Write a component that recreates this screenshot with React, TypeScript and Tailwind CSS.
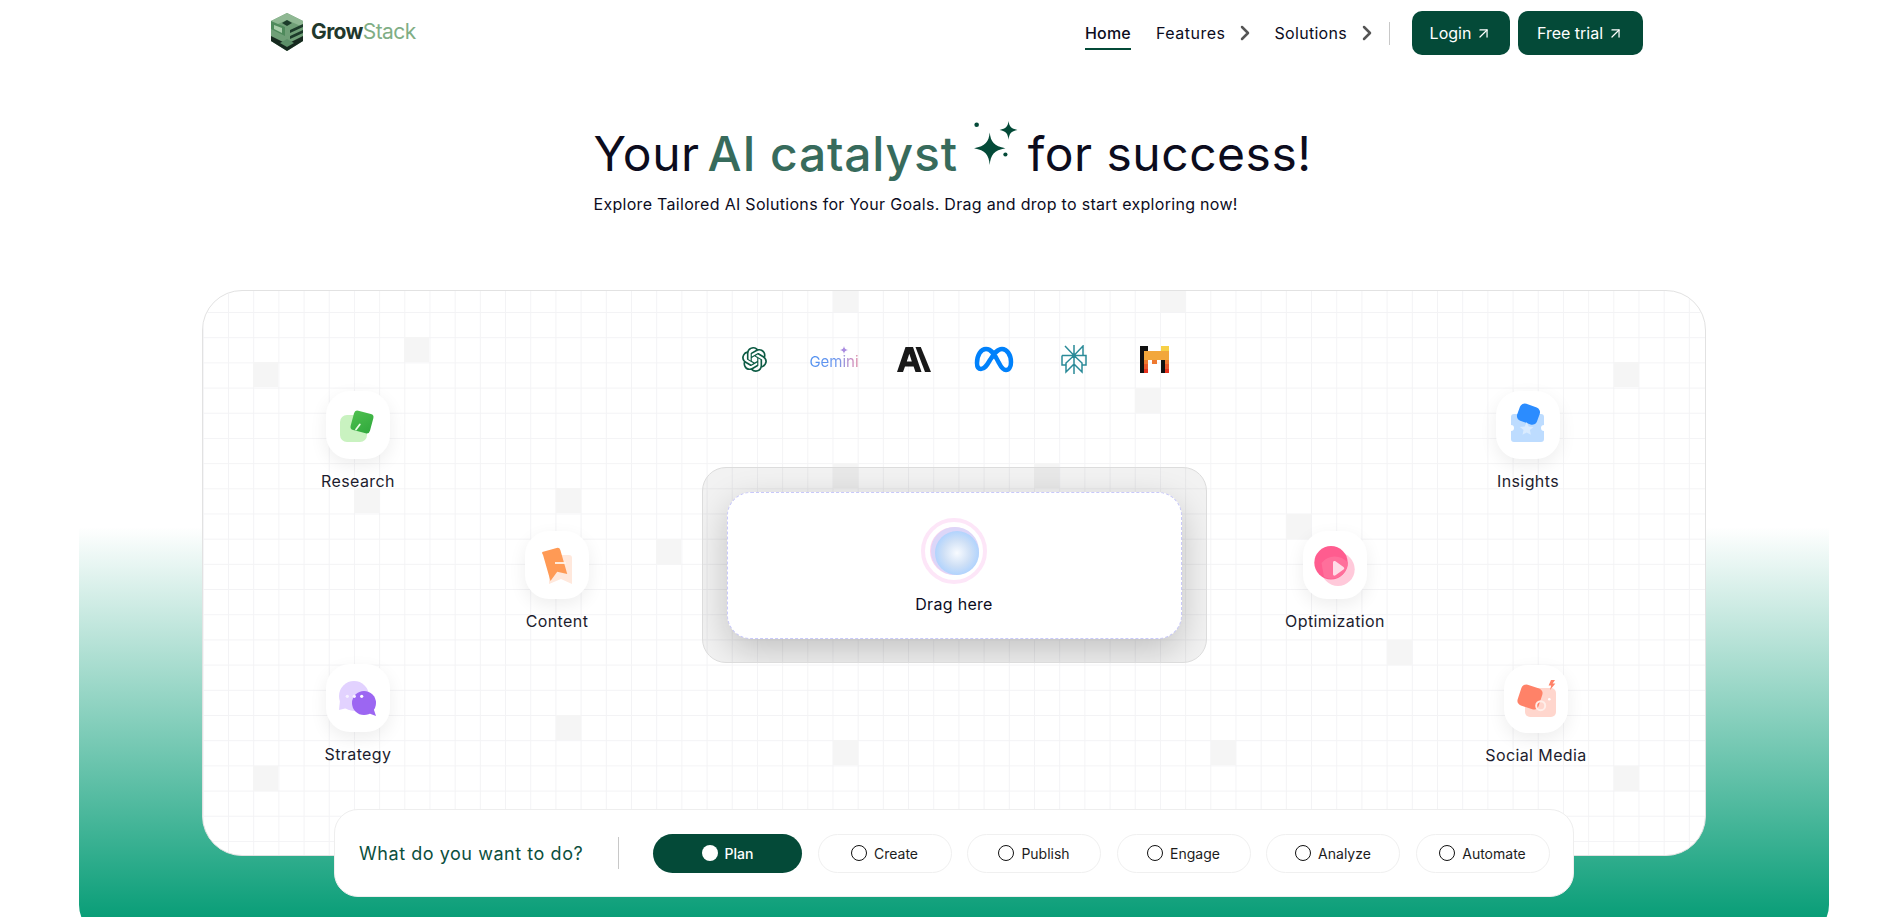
import { ArrowUpRight, ChevronRight } from "lucide-react";
import { SiOpenai } from "react-icons/si";
import type { ReactNode } from "react";

const shadedCells = [
  [7, 1], [1, 2], [24, -1], [37, -1], [55, 2], [36, 3], [5, 7], [13, 7], [17, 9],
  [24, 6], [32, 6], [42, 8], [46, 13], [13, 16], [24, 17], [39, 17], [1, 18], [55, 18],
];

const actions = ["Create", "Publish", "Engage", "Analyze", "Automate"];

function GrowStackMark() {
  return (
    <svg width="34" height="40" viewBox="0 0 34 40">
      <path d="M17 1 33 9v20l-16 10L1 29V9z" fill="#6f9f77" />
      <path d="M17 1 33 9v6l-16-7-16 7V9z" fill="#8fb893" />
      <path d="M1 9l14 6v9l-14-7z" fill="#4f8a5c" />
      <path d="M4 13l8 3v5l-8-4z" fill="#a8cdaa" />
      <path d="M33 12l-13 6v3l13-6zM33 18l-13 6v3l13-6z" fill="#1c3b2a" />
      <path d="M1 24l16 8 16-8v5l-16 10L1 29z" fill="#16291f" />
      <path d="M10 31l7-4 7 4-7 4z" fill="#5c8f68" />
      <path d="M17 8l5 3-5 3-5-3z" fill="#1c3b2a" />
    </svg>
  );
}

function Sparkles() {
  return (
    <svg width="46" height="45" viewBox="0 0 44 43" fill="#044a38">
      <path d="M16 11c1 9 4 13 15 15-11 2-14 6-15 16-1-10-4-14-15-16 11-2 14-6 15-15z" />
      <path d="M34 0c.6 5 2.400 7.300 8.500 8.500C36.400 9.700 34.600 12 34 18c-.6-6-2.400-8.300-8.500-9.500C31.600 7.300 33.400 5 34 0z" />
      <circle cx="3.500" cy="3.500" r="2.200" />
      <circle cx="31" cy="32" r="2" />
    </svg>
  );
}

function GeminiLogo() {
  return (
    <span className="relative block pt-[6px]">
      <span className="block bg-[linear-gradient(90deg,#4d8ff0_0%,#6c97ee_55%,#c88cc4_85%,#dc8aa0_100%)] bg-clip-text text-[15px] leading-5 text-transparent">
        Gemini
      </span>
      <svg className="absolute left-[31px] top-0" width="8" height="8" viewBox="0 0 8 8" fill="#a98be0">
        <path d="M4 0c.3 2.400 1.300 3.500 4 4-2.700.5-3.700 1.600-4 4-.3-2.400-1.300-3.500-4-4 2.700-.5 3.700-1.600 4-4z" />
      </svg>
    </span>
  );
}

function AnthropicLogo() {
  return (
    <svg width="34" height="25" viewBox="0 0 34 25" fill="#191919">
      <path fillRule="evenodd" d="M0 25 8.500 0h7.500L24.500 25h-6l-1.900-5.500H8L6 25zM9.800 14.500h5L12.300 6.800z" />
      <path d="M18.500 0h5.300L34 25h-6z" />
    </svg>
  );
}

function MetaLogo() {
  return (
    <svg width="40" height="27" viewBox="0 0 40 27" fill="none">
      <path
        d="M3 17C3 9 7 3 12 3c7 0 10 9 13 14 2 4 4 7 7 7 3 0 5-3 5-8C37 9 33 3 28 3c-5 0-8 5-12 11-3 5-5 9-9 9-3 0-4-3-4-6z"
        stroke="#0081fb"
        strokeWidth="4.500"
        strokeLinejoin="round"
      />
    </svg>
  );
}

function PerplexityLogo() {
  return (
    <svg width="26" height="29" viewBox="0 0 26 29" fill="none" stroke="#2a8a98" strokeWidth="1.500">
      <path d="M13 0v29M4 1l9 9.500L22 1v9.500M1 10.500h24v9.500h-4M1 10.500v9.500h4M13 10.500 5 18v9l8-8 8 8v-9z" />
    </svg>
  );
}

function MistralLogo() {
  const rows = ["#f7d046", "#f2a73b", "#f2a73b", "#ee792f", "#eb5829", "#e5321e"];
  const mask = ["1100011", "1111111", "1111111", "1101011", "1100011", "1100011"];
  return (
    <svg width="29" height="27" viewBox="0 0 35 30" preserveAspectRatio="none" shapeRendering="crispEdges">
      {mask.map((row, y) =>
        row.split("").map((cell, x) =>
          cell === "1" ? (
            <rect
              fill={x === 0 || (y > 2 && x === 5) || (y === 0 && x === 1) ? "#111" : rows[y]}
              height="5"
              key={`${x}-${y}`}
              width="5"
              x={x * 5}
              y={y * 5}
            />
          ) : null,
        ),
      )}
    </svg>
  );
}

function Orb() {
  return (
    <svg width="66" height="66" viewBox="0 0 66 66">
      <defs>
        <radialGradient id="orbCore" cx="50%" cy="50%" r="55%">
          <stop offset="0%" stopColor="#f8fbff" />
          <stop offset="55%" stopColor="#cfe0f6" />
          <stop offset="100%" stopColor="#a9d0ff" />
        </radialGradient>
      </defs>
      <circle cx="33" cy="33" r="31" fill="none" stroke="#fde6f8" strokeWidth="4" />
      <circle cx="33" cy="33" r="24" fill="#fbd3ef" />
      <circle cx="34" cy="33" r="24" fill="#dcd6f8" />
      <circle cx="36" cy="35" r="22" fill="url(#orbCore)" />
    </svg>
  );
}

function ResearchIcon() {
  return (
    <>
      <defs>
        <linearGradient id="researchFront" x1="0" y1="0" x2="1" y2="1">
          <stop offset="0%" stopColor="#4fc04f" />
          <stop offset="100%" stopColor="#2fa83c" />
        </linearGradient>
      </defs>
      <rect x="14" y="24" width="27" height="27" rx="7" fill="#c9f2c0" />
      <rect x="26" y="21" width="20" height="20" rx="3.500" fill="url(#researchFront)" transform="rotate(15 36 31)" />
      <path d="M30 38.500 33.800 33.500" stroke="#eafbe6" strokeWidth="1.800" strokeLinecap="round" />
    </>
  );
}

function ContentIcon() {
  return (
    <>
      <path d="M27 24h17a3 3 0 0 1 3 3v26l-11-5-12 5V27a3 3 0 0 1 3-3z" fill="#ffe8dc" />
      <path
        d="M21 18h15a3 3 0 0 1 3 3v25l-9-5-9 7V21a3 3 0 0 1 0-3z"
        fill="#ff9a55"
        transform="rotate(-16 30 33)"
      />
      <path d="M30 32h11" stroke="#fff3ea" strokeWidth="1.800" />
    </>
  );
}

function StrategyIcon() {
  return (
    <>
      <circle cx="28" cy="32" r="15" fill="#e2d2ff" />
      <path d="M14 36 13 46l8-2z" fill="#e2d2ff" />
      <circle cx="38" cy="39" r="12" fill="#9c66f2" />
      <path d="M47 43l3 9-8-3z" fill="#9c66f2" />
      <circle cx="21.300" cy="32.300" r="1.600" fill="#f7f2ff" />
      <circle cx="28.300" cy="32.300" r="1.600" fill="#f7f2ff" />
      <circle cx="35.700" cy="32.300" r="1.600" fill="#fff" />
    </>
  );
}

function InsightsIcon() {
  return (
    <>
      <path
        d="M18 23h27a3 3 0 0 1 3 3v8a3 3 0 0 0 0 6v8a3 3 0 0 1-3 3H18a3 3 0 0 1-3-3v-8a3 3 0 0 0 0-6v-8a3 3 0 0 1 3-3z"
        fill="#bddcff"
      />
      <rect x="22" y="14" width="21" height="18" rx="5" fill="#2b8cff" transform="rotate(20 32 23)" />
      <path
        d="m30.700 31 2 4.400 4.800.5-3.600 3.200 1 4.700-4.200-2.400-4.200 2.400 1-4.700-3.600-3.200 4.800-.5z"
        fill="#d9ebff"
      />
    </>
  );
}

function OptimizationIcon() {
  return (
    <>
      <circle cx="35" cy="38.300" r="16.700" fill="#ffc9da" />
      <circle cx="28" cy="31.700" r="16.700" fill="#ff5c8f" />
      <path d="M18.500 32a16.700 16.700 0 0 1 26.200-.500 16.700 16.700 0 0 1-.5 5A16.700 16.700 0 0 1 21 46z" fill="#ff6f9b" />
      <path d="M30 31.500c0-1.500 1.200-2 2.500-1.200l8 5.700c1 .8 1 1.900 0 2.600l-8 5.700c-1.300.8-2.500.3-2.500-1.200z" fill="#ffdce7" />
    </>
  );
}

function SocialIcon() {
  return (
    <>
      <rect x="21" y="23" width="31" height="29" rx="5" fill="#ffd6cd" />
      <rect x="15" y="21" width="22" height="22" rx="5" fill="#ff8268" transform="rotate(18 26 32)" />
      <circle cx="36.700" cy="40.700" r="4.500" fill="none" stroke="#ffeee9" strokeWidth="2" />
      <circle cx="45.300" cy="34.300" r="1.300" fill="#fff" />
      <path d="M47 15h4l-2.400 3.500h2.800L46 25l1.200-4.500h-2.600z" fill="#ff8268" />
    </>
  );
}

function FeatureNode({ className, label, children }: { className: string; label: string; children: ReactNode }) {
  return (
    <div className={`absolute ${className}`}>
      <div className="h-[68px] w-16 rounded-3xl bg-white shadow-[0_6px_18px_rgba(0,0,0,0.07)]">
        <svg width="64" height="68" viewBox="0 0 64 68">
          {children}
        </svg>
      </div>
      <p className="absolute left-8 top-[78px] -translate-x-1/2 whitespace-nowrap text-center text-[16px] leading-6 tracking-[0.4px] text-[#1c1c2e]">
        {label}
      </p>
    </div>
  );
}

function NavButton({ label, width }: { label: string; width: string }) {
  return (
    <button className={`flex h-11 items-center justify-center gap-1 rounded-[10px] bg-[#044a38] text-[16px] text-white ${width}`} type="button">
      {label}
      <ArrowUpRight size={17} strokeWidth={1.75} />
    </button>
  );
}

export default function App() {
  return (
    <div className="relative h-[917px] overflow-hidden bg-white font-['Inter',sans-serif] text-[#0c0c1d]">
      <header className="flex h-[66px] items-start pl-[270px] pr-[255px] pt-[11px]">
        <div className="flex items-center gap-[7px] pt-[1px]">
          <GrowStackMark />
          <span className="text-[21px] font-bold leading-10 tracking-[-0.6px] text-[#21382c]">
            Grow<span className="font-normal text-[#7fae85]">Stack</span>
          </span>
        </div>
        <nav className="ml-auto flex h-11 items-center text-[16px]">
          <a className="relative mr-[25px] font-medium leading-[44px] tracking-[0.2px]">
            Home
            <span className="absolute bottom-[5px] left-0 h-0.5 w-full bg-[#044a38]" />
          </a>
          <a className="tracking-[0.5px]">Features</a>
          <ChevronRight className="ml-[7px] mr-[18px] text-[#555]" size={24} strokeWidth={2.5} />
          <a className="tracking-[0.3px]">Solutions</a>
          <ChevronRight className="ml-[8px] text-[#555]" size={24} strokeWidth={2.5} />
          <span className="ml-[10px] mr-[22px] h-[23px] w-px bg-[#c8c8c8]" />
          <div className="flex gap-2">
            <NavButton label="Login" width="w-[98px]" />
            <NavButton label="Free trial" width="w-[125px]" />
          </div>
        </nav>
      </header>

      <div className="mx-auto mt-[52px] w-fit pl-[7px]">
        <h1 className="flex items-center text-[48px] font-normal leading-[72px] tracking-[0.5px]">
          Your
          <span className="ml-[8px] font-medium tracking-[0.8px] text-[#376b5c]">AI catalyst</span>
          <span className="ml-[15px] mr-[9px] -mt-[22px]">
            <Sparkles />
          </span>
          for success!
        </h1>
        <p className="mt-[2px] text-[16px] leading-6 tracking-[0.3px]">
          Explore Tailored AI Solutions for Your Goals. Drag and drop to start exploring now!
        </p>
      </div>

      <div className="absolute left-[79px] top-[527px] h-[410px] w-[1750px] rounded-b-[32px] bg-[linear-gradient(to_bottom,#ffffff_0%,#0a9e78_95%)]" />

      <section className="absolute left-[202px] top-[290px] h-[566px] w-[1504px] rounded-[40px] border border-[#e2e2e2] bg-white">
        <div className="absolute inset-0 overflow-hidden rounded-[39px] bg-[linear-gradient(to_right,#f3f3f5_1px,transparent_1px),linear-gradient(to_bottom,#f3f3f5_1px,transparent_1px)] bg-[size:25.2px_25.2px] bg-[position:-0.2px_21px]">
          {shadedCells.map(([col, row]) => (
            <span
              className="absolute h-[25px] w-[25px] bg-[#f5f5f5]"
              key={`${col}-${row}`}
              style={{ left: 25 + col * 25.2, top: 21 + row * 25.2 }}
            />
          ))}
        </div>

        <div className="relative flex flex-col items-center">
          <div className="mt-[53px] flex h-[30px] items-center">
            <span className="flex w-20 justify-center text-[#0e5c45]"><SiOpenai size={25} /></span>
            <span className="flex w-20 justify-center"><GeminiLogo /></span>
            <span className="flex w-20 justify-center"><AnthropicLogo /></span>
            <span className="flex w-20 justify-center"><MetaLogo /></span>
            <span className="flex w-20 justify-center"><PerplexityLogo /></span>
            <span className="flex w-20 justify-center"><MistralLogo /></span>
          </div>

          <div className="mt-[93px] h-[196px] w-[505px] overflow-hidden rounded-3xl border border-[#dcdcdc] bg-black/5 p-6">
            <div className="flex h-[147px] flex-col items-center rounded-3xl border border-dashed border-[#c9c9fb] bg-white pt-[25px] shadow-[0_12px_36px_rgba(0,0,0,0.2)]">
              <Orb />
              <p className="mt-[8px] text-[16px] leading-6 tracking-[0.3px]">Drag here</p>
            </div>
          </div>
        </div>

        <FeatureNode className="left-[123px] top-[100px]" label="Research">
          <ResearchIcon />
        </FeatureNode>
        <FeatureNode className="left-[322px] top-[240px]" label="Content">
          <ContentIcon />
        </FeatureNode>
        <FeatureNode className="left-[123px] top-[373px]" label="Strategy">
          <StrategyIcon />
        </FeatureNode>
        <FeatureNode className="left-[1293px] top-[100px]" label="Insights">
          <InsightsIcon />
        </FeatureNode>
        <FeatureNode className="left-[1100px] top-[240px]" label="Optimization">
          <OptimizationIcon />
        </FeatureNode>
        <FeatureNode className="left-[1301px] top-[374px]" label="Social Media">
          <SocialIcon />
        </FeatureNode>

        <div className="absolute left-[131px] top-[518px] flex h-[88px] w-[1240px] items-center rounded-3xl border border-[#eeeeee] bg-white pl-[24px]">
          <p className="w-[259px] text-[18px] tracking-[0.55px] text-[#0b4f3d]">What do you want to do?</p>
          <span className="h-8 w-px bg-[#c8c8c8]" />
          <div className="ml-[34px] flex items-center gap-[15.5px] text-[14px]">
            <button className="flex h-[39px] w-[149px] items-center justify-center gap-[7px] rounded-full bg-[#044a38] font-medium text-white" type="button">
              <span className="h-4 w-4 rounded-full bg-white" />
              Plan
            </button>
            {actions.map((action) => (
              <button
                className="flex h-[39px] w-[134px] items-center justify-center gap-[7px] rounded-full border border-[#f0f0f0] bg-white text-[#1c1c1c]"
                key={action}
                type="button"
              >
                <span className="h-4 w-4 rounded-full border border-[#111]" />
                {action}
              </button>
            ))}
          </div>
        </div>
      </section>
    </div>
  );
}
